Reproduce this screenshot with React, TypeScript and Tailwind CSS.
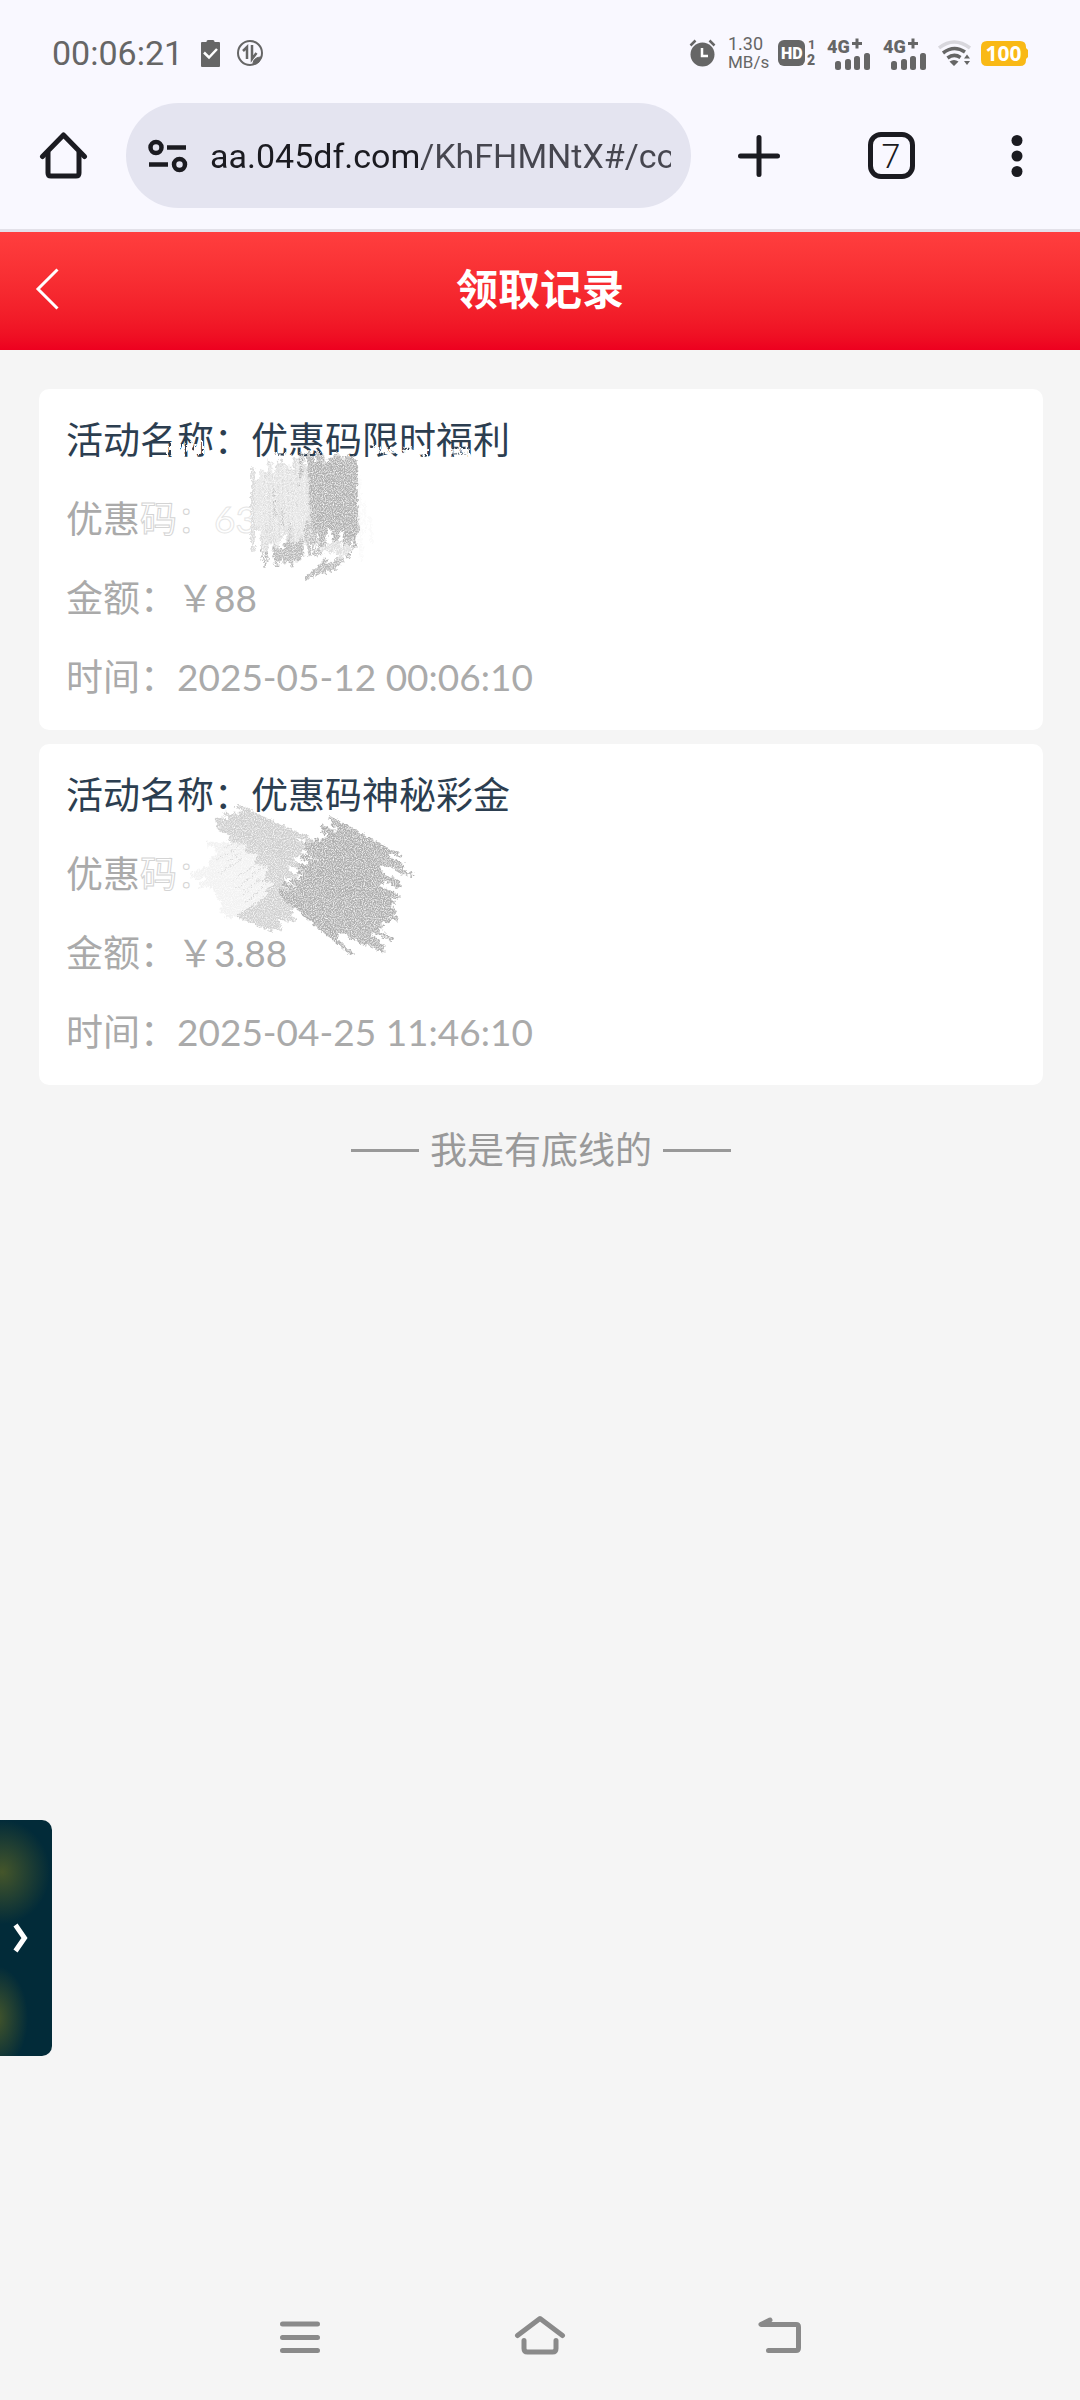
import React from 'react';

type Point = [number, number];

interface HatchProps {
  from: [Point, Point];
  to: [Point, Point];
  count: number;
  color: string;
  width?: number;
  jitter?: number;
  seed?: number;
}

interface ClaimRecord {
  name: string;
  code: string;
  amount: string;
  time: string;
  scribble: React.ReactNode;
}

// Pencil strokes running from one edge to the other
function Hatch({ from, to, count, color, width = 4, jitter = 10, seed = 1 }: HatchProps) {
  let state = seed * 7919;
  const rand = () => {
    state = (state * 16807) % 2147483647;
    return state / 2147483647 - 0.5;
  };
  const mix = (a: Point, b: Point, t: number): Point => [a[0] + (b[0] - a[0]) * t, a[1] + (b[1] - a[1]) * t];

  const strokes: string[] = [];
  for (let i = 0; i < count; i++) {
    const t = i / (count - 1);
    const p = mix(from[0], from[1], t);
    const q = mix(to[0], to[1], t);
    const len = Math.hypot(q[0] - p[0], q[1] - p[1]) || 1;
    const s = (rand() * jitter) / len;
    const e = 1 + (rand() * jitter * 1.6) / len;
    const a = mix(p, q, s);
    const b = mix(p, q, e);
    strokes.push(`M${a[0].toFixed(1)} ${a[1].toFixed(1)}L${b[0].toFixed(1)} ${b[1].toFixed(1)}`);
  }
  return <path d={strokes.join('')} stroke={color} strokeWidth={width} fill="none" />;
}

function PencilFilter({ id }: { id: string }) {
  return (
    <filter id={id} x="-5%" y="-5%" width="110%" height="110%">
      <feTurbulence type="fractalNoise" baseFrequency="0.3" numOctaves="2" seed="4" result="rough" />
      <feDisplacementMap in="SourceGraphic" in2="rough" scale="7" xChannelSelector="R" yChannelSelector="G" result="edge" />
      <feTurbulence type="fractalNoise" baseFrequency="0.9" numOctaves="2" seed="9" result="noise" />
      <feColorMatrix in="noise" type="matrix" values="0 0 0 0 1  0 0 0 0 1  0 0 0 0 1  2 0 0 0 -0.8" result="grain" />
      <feComposite in="grain" in2="edge" operator="in" result="speck" />
      <feMerge>
        <feMergeNode in="edge" />
        <feMergeNode in="speck" />
      </feMerge>
    </filter>
  );
}

function ScribbleOne() {
  return (
    <svg className="pointer-events-none absolute top-0 left-0" width="480" height="220" viewBox="0 0 480 220" aria-hidden="true">
      <PencilFilter id="pencil-1" />
      <g filter="url(#pencil-1)">
        <Hatch from={[[234, 64], [264, 66]]} to={[[234, 70], [262, 72]]} count={9} color="#fff" width={3} jitter={4} seed={2} />
        <Hatch from={[[334, 57], [388, 60]]} to={[[342, 66], [388, 67]]} count={14} color="#fff" width={2} jitter={5} seed={5} />
        <Hatch from={[[410, 58], [428, 58]]} to={[[410, 66], [430, 67]]} count={8} color="#fff" width={2} jitter={4} seed={7} />
        <Hatch from={[[128, 56], [164, 52]]} to={[[128, 68], [164, 64]]} count={10} color="#fff" width={2} jitter={6} seed={8} />
        <Hatch from={[[214, 84], [268, 70]]} to={[[214, 150], [272, 164]]} count={14} color="#dadada" width={4} jitter={18} seed={3} />
        <Hatch from={[[218, 86], [264, 74]]} to={[[218, 140], [268, 158]]} count={11} color="#e6e6e6" width={3} jitter={22} seed={13} />
        <Hatch from={[[235, 158], [262, 152]]} to={[[238, 174], [264, 170]]} count={8} color="#b8b8b8" width={4} jitter={7} seed={6} />
        <Hatch from={[[222, 160], [226, 160]]} to={[[226, 176], [229, 174]]} count={2} color="#b5b5b5" width={2} jitter={4} seed={6} />
        <Hatch from={[[270, 66], [316, 74]]} to={[[276, 152], [318, 148]]} count={16} color="#b0b0b0" width={4} jitter={16} seed={4} />
        <Hatch from={[[262, 66], [264, 68]]} to={[[260, 100], [261, 94]]} count={2} color="#aaa" width={1} seed={2} />
        <Hatch from={[[235, 100], [250, 130]]} to={[[236, 122], [252, 160]]} count={3} color="#bbb" width={1} seed={6} />
        <Hatch from={[[266, 140], [270, 130]]} to={[[272, 172], [282, 166]]} count={3} color="#bdbdbd" width={3} seed={8} />
        <Hatch from={[[304, 150], [308, 146]]} to={[[308, 164], [312, 164]]} count={3} color="#b5b5b5" width={3} seed={9} />
        <Hatch from={[[284, 160], [300, 170]]} to={[[302, 152], [310, 160]]} count={4} color="#dedede" width={4} jitter={6} seed={4} />
        <Hatch from={[[267, 190], [290, 183]]} to={[[286, 172], [302, 172]]} count={4} color="#b8b8b8" width={4} jitter={5} seed={3} />
        <Hatch from={[[320, 92], [330, 120]]} to={[[322, 162], [332, 146]]} count={3} color="#fafafa" width={3} jitter={16} seed={3} />
      </g>
    </svg>
  );
}

function ScribbleTwo() {
  return (
    <svg className="pointer-events-none absolute top-0 left-0" width="480" height="230" viewBox="0 0 480 230" aria-hidden="true">
      <PencilFilter id="pencil-2" />
      <g filter="url(#pencil-2)">
        <Hatch from={[[200, 63], [176, 82]]} to={[[266, 94], [260, 124]]} count={10} color="#cdcdcd" width={4} jitter={12} seed={3} />
        <Hatch from={[[194, 92], [200, 172]]} to={[[256, 124], [244, 190]]} count={19} color="#d0d0d0" width={4} jitter={16} seed={5} />
        <Hatch from={[[170, 100], [192, 172]]} to={[[200, 102], [232, 146]]} count={17} color="#f1f1f1" width={5} jitter={12} seed={6} />
        <Hatch from={[[156, 130], [190, 172]]} to={[[202, 110], [232, 138]]} count={13} color="#f2f2f2" width={5} jitter={12} seed={2} />
        <Hatch from={[[190, 140], [206, 160]]} to={[[214, 122], [232, 134]]} count={4} color="#d6d6d6" width={1} jitter={14} seed={12} />
        <Hatch from={[[182, 106], [186, 126]]} to={[[202, 94], [208, 112]]} count={4} color="#dadada" width={1} jitter={14} seed={11} />
        <Hatch from={[[294, 76], [268, 108]]} to={[[360, 112], [348, 148]]} count={12} color="#aeaeae" width={4} jitter={20} seed={4} />
        <Hatch from={[[264, 112], [246, 154]]} to={[[360, 153], [306, 204]]} count={20} color="#aeaeae" width={4} jitter={20} seed={7} />
        <Hatch from={[[250, 136], [266, 164]]} to={[[350, 172], [332, 204]]} count={12} color="#b0b0b0" width={4} jitter={18} seed={9} />
        <Hatch from={[[330, 108], [330, 108]]} to={[[374, 132], [370, 132]]} count={2} color="#b4b4b4" width={3} jitter={2} seed={3} />
      </g>
    </svg>
  );
}

const RECORDS: ClaimRecord[] = [
  { name: '优惠码限时福利', code: '63', amount: '￥88', time: '2025-05-12 00:06:10', scribble: <ScribbleOne /> },
  { name: '优惠码神秘彩金', code: '', amount: '￥3.88', time: '2025-04-25 11:46:10', scribble: <ScribbleTwo /> },
];

function Signal() {
  return (
    <svg width="46" height="36" viewBox="0 -4 46 36" fill="#666" aria-hidden="true">
      <text x="1" y="14" fontSize="18" fontWeight="900" fontFamily="Roboto, sans-serif">4G</text>
      <path d="M26 4.500h10M31 -0.500v10" stroke="#666" strokeWidth="3" />
      <rect x="9" y="22" width="6" height="9" rx="2.500" />
      <rect x="19" y="20" width="6" height="11" rx="2.500" />
      <rect x="28" y="17" width="6" height="14" rx="2.500" />
      <rect x="38" y="14" width="6" height="17" rx="2.500" />
    </svg>
  );
}

function StatusBar() {
  return (
    <div className="flex h-[103px] items-center justify-between pt-[3px] pr-[51px] pl-[52px] text-[#666]">
      <div className="flex items-center">
        <span className="w-[149px] text-[34px] leading-10">00:06:21</span>
        <svg width="19" height="27" viewBox="0 0 19 27" aria-hidden="true">
          <path d="M1 2h4.500V1.500Q5.500 0 7 0h5q1.500 0 1.500 1.500V2H18q1 0 1 1v23q0 1-1 1H1q-1 0-1-1V3q0-1 1-1z" fill="#666" />
          <path d="M3 12.500l5 5 8-8.500" stroke="#fff" strokeWidth="2.500" fill="none" />
        </svg>
        <svg className="ml-4" width="28" height="28" viewBox="0 0 28 28" fill="none" stroke="#666" aria-hidden="true">
          <circle cx="14" cy="14" r="12" strokeWidth="2" />
          <path d="M7 12l4-4v12M16 6v14l4.500-6" strokeWidth="2.500" />
          <path d="M17 25c0-5 4-7 8.500-7l-3 5.500z" fill="#666" strokeWidth="1" />
        </svg>
      </div>

      <div className="flex items-center">
        <svg className="mr-3" width="27" height="28" viewBox="0 0 27 28" fill="none" aria-hidden="true">
          <circle cx="13.500" cy="15.500" r="12" fill="#666" />
          <path d="M1.500 6.500l5-5M25.500 6.500l-5-5" stroke="#666" strokeWidth="2.500" />
          <path d="M13 9v8h6" stroke="#fff" strokeWidth="2.500" />
        </svg>
        <div className="mr-3 w-[38px] text-[18px] leading-[18px]">
          <div>1.30</div>
          <div className="text-[17px]">MB/s</div>
        </div>
        <svg className="mr-2" width="40" height="32" viewBox="0 0 40 32" fill="#666" fontFamily="Roboto, sans-serif" aria-hidden="true">
          <rect x="0" y="3" width="27" height="26" rx="6" />
          <text x="3" y="22" fontSize="16" fontWeight="900" fill="#fff">HD</text>
          <text x="30" y="12" fontSize="13" fontWeight="700">1</text>
          <text x="29" y="28" fontSize="14" fontWeight="900">2</text>
        </svg>
        <div className="mr-[10px]"><Signal /></div>
        <div className="mr-[10px]"><Signal /></div>
        <svg className="mr-[9px]" width="34" height="27" viewBox="0 0 34 27" fill="none" aria-hidden="true">
          <path d="M1 8Q16 -4 32 8" stroke="#d8d7dd" strokeWidth="3.500" />
          <path d="M5 13Q16 4.500 27 12M9.500 18Q16 13 22.500 17.500" stroke="#666" strokeWidth="3.500" />
          <path d="M11.500 21.500Q16 18.500 20.500 21.500L16 26zM26 18.500l3-4 3 4zM26 21l3 4 3-4z" fill="#666" />
        </svg>
        <svg width="48" height="25" viewBox="0 0 48 25" aria-hidden="true">
          <path d="M6 0h33q6 0 6 6v1l2 2v7l-2 2v1q0 6-6 6H6q-6 0-6-6V6q0-6 6-6z" fill="#f9b916" />
          <text x="22.500" y="20" textAnchor="middle" fontSize="21" fontWeight="700" fontFamily="'Noto Sans', sans-serif" fill="#fff">100</text>
        </svg>
      </div>
    </div>
  );
}

function BrowserBar() {
  return (
    <div className="flex items-center border-b-[3px] border-[#e3e1e9] pr-[3px] pb-[21px] pl-[39px]">
      <button type="button" aria-label="主页" className="mr-[38px]">
        <svg width="49" height="49" viewBox="0 0 49 49" fill="none" stroke="#1b1b21" strokeWidth="5" strokeLinejoin="round" aria-hidden="true">
          <path d="M9 21v21q0 3 3 3h25q3 0 3-3V21" />
          <path d="M3.500 25.500L24.500 4l21 21.500" strokeLinecap="round" />
        </svg>
      </button>

      <div className="flex h-[105px] min-w-0 flex-1 items-center rounded-full bg-[#e4e4f0] pr-5 pl-[21px]">
        <svg className="mr-[22px] shrink-0" width="41" height="34" viewBox="0 0 41 34" fill="none" stroke="#1b1b21" strokeWidth="4.500" aria-hidden="true">
          <circle cx="9" cy="8.500" r="5.500" />
          <path d="M20 8.500h19M2 25.500h19" />
          <circle cx="32.500" cy="25.500" r="5.500" />
        </svg>
        {/* The host part of the address is darker than the path */}
        <input
          type="text"
          aria-label="网址"
          readOnly
          defaultValue="aa.045df.com/KhFHMNtX#/co"
          className="w-0 min-w-0 flex-1 bg-linear-to-r from-[#1b1b21] from-[212px] to-[#46464f] to-[212px] bg-clip-text text-[34px] leading-[48px] text-transparent outline-none"
        />
      </div>

      <button type="button" aria-label="新标签页" className="ml-[2px] flex w-[132px] justify-center">
        <svg width="42" height="42" viewBox="0 0 42 42" stroke="#1b1b21" strokeWidth="5" strokeLinecap="round" aria-hidden="true">
          <path d="M21 2.500v37M2.500 21h37" />
        </svg>
      </button>
      <button type="button" aria-label="切换标签页" className="flex w-[132px] justify-center">
        <span className="flex h-[47px] w-[47px] items-center justify-center rounded-[13px] border-5 border-[#1b1b21] text-[34px] leading-9 font-light text-[#1b1b21]">7</span>
      </button>
      <button type="button" aria-label="更多" className="flex w-[120px] justify-center">
        <svg width="12" height="42" viewBox="0 0 12 42" fill="#1b1b21" aria-hidden="true">
          <circle cx="6" cy="5.500" r="5.500" />
          <circle cx="6" cy="21" r="5.500" />
          <circle cx="6" cy="36.500" r="5.500" />
        </svg>
      </button>
    </div>
  );
}

function RecordCard({ name, code, amount, time, scribble }: ClaimRecord) {
  return (
    <li className="relative rounded-[10px] bg-white pt-[11px] pr-7 pb-[14px] pl-[27px]">
      <dl className="text-[37px] leading-[79px] text-[#aaa]">
        <div className="flex text-[#2c3e50]">
          <dt>活动名称：</dt>
          <dd>{name}</dd>
        </div>
        <div className="flex">
          <dt>
            优惠<span className="text-white [-webkit-text-stroke:1px_#d4d4d4]">码：</span>
          </dt>
          <dd className="text-white [-webkit-text-stroke:1px_#e6e6e6]">{code}</dd>
        </div>
        <div className="flex">
          <dt>金额：</dt>
          <dd>{amount}</dd>
        </div>
        <div className="flex">
          <dt>时间：</dt>
          <dd>{time}</dd>
        </div>
      </dl>
      {scribble}
    </li>
  );
}

export default function App() {
  return (
    <div className="flex min-h-screen flex-col bg-[#f5f5f5] font-[Lato,'Noto_Sans_CJK_SC',sans-serif]">
      <div className="bg-[#f9f8ff] font-[Roboto,'Noto_Sans_CJK_SC',sans-serif]">
        <StatusBar />
        <BrowserBar />
      </div>

      <header className="grid h-[118px] grid-cols-[1fr_auto_1fr] items-center bg-linear-to-b from-[#ff3e3e] to-[#ed001f] px-[35px] pb-[5px] text-white">
        <button type="button" aria-label="返回" className="justify-self-start">
          <svg width="25" height="42" viewBox="0 0 25 42" fill="none" stroke="#fff" strokeWidth="3" aria-hidden="true">
            <path d="M22.500 1.500L3 21l19.500 19.500" />
          </svg>
        </button>
        <h1 className="text-[42px] leading-[60px] font-bold">领取记录</h1>
      </header>

      <main className="flex-1 pt-[39px] pr-[37px] pl-[39px]">
        <ul className="flex flex-col gap-[14px]">
          {RECORDS.map((record) => (
            <RecordCard key={record.time} {...record} />
          ))}
        </ul>
        <div className="mt-[25px] flex items-center justify-center gap-[11px] text-[37px] leading-[80px] text-[#999]">
          <span className="h-[3px] w-[68px] bg-[#999]" />
          <p>我是有底线的</p>
          <span className="h-[3px] w-[68px] bg-[#999]" />
        </div>
      </main>

      {/* Side drawer handle */}
      <button
        type="button"
        aria-label="展开"
        className="fixed bottom-[344px] left-0 flex h-[236px] w-[52px] items-center rounded-r-[10px] bg-[#022b39] bg-[radial-gradient(48px_52px_at_2px_52px,#45562a,transparent),radial-gradient(32px_52px_at_-4px_198px,#45562a,transparent)] pl-[13px]"
      >
        <svg width="15" height="30" viewBox="0 0 15 30" fill="none" stroke="#fff" strokeWidth="5" aria-hidden="true">
          <path d="M2.500 2L11.500 15L2.500 28" />
        </svg>
      </button>

      <nav className="flex h-[126px] items-center justify-center">
        <button type="button" aria-label="最近任务" className="flex w-60 justify-center">
          <svg width="40" height="40" viewBox="0 0 40 40" stroke="#8a8a8a" strokeWidth="5" strokeLinecap="round" aria-hidden="true">
            <path d="M2.500 7h35M2.500 20.500h35M2.500 33.500h35" />
          </svg>
        </button>
        <button type="button" aria-label="桌面" className="flex w-60 justify-center">
          <svg width="52" height="44" viewBox="0 0 52 44" fill="none" stroke="#8a8a8a" strokeWidth="5" strokeLinecap="round" strokeLinejoin="round" aria-hidden="true">
            <path d="M3.500 20.500L26 3.500l22.500 17" />
            <path d="M10 25.500v8q0 3.500 3.500 3.500h25q3.500 0 3.500-3.500v-8" />
          </svg>
        </button>
        <button type="button" aria-label="后退" className="flex w-60 justify-center">
          <svg width="44" height="40" viewBox="0 0 44 40" fill="none" stroke="#8a8a8a" strokeWidth="5" strokeLinecap="round" strokeLinejoin="round" aria-hidden="true">
            <path d="M12 3L3 7.500h35q2.500 0 2.500 2.500v21q0 2.500-2.500 2.500H10.500" />
          </svg>
        </button>
      </nav>
    </div>
  );
}
